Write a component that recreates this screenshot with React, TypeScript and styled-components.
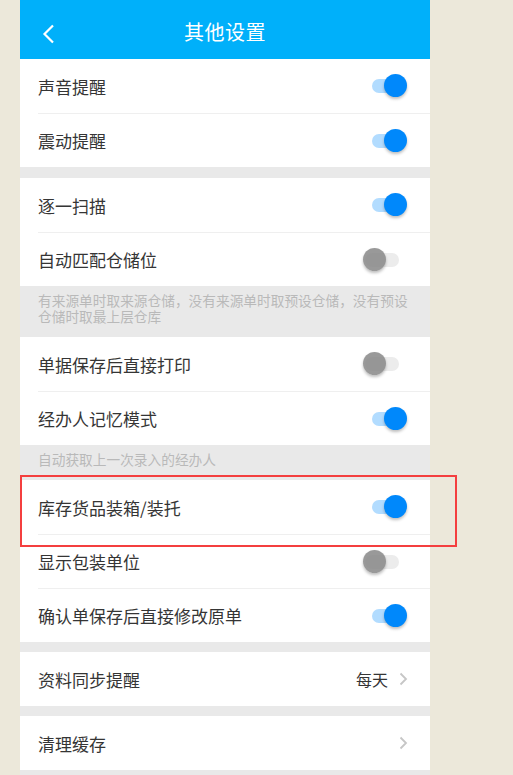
import React from "react";
import styled, { createGlobalStyle } from "styled-components";

const Global = createGlobalStyle`
  html, body { margin: 0; padding: 0; background: #ece8da; }
  body { font-family: "Noto Sans CJK SC", "Noto Sans", sans-serif; }
`;

const Page = styled.div`
  position: relative;
  width: 513px;
  height: 775px;
  overflow: hidden;
  padding-left: 20px;
  box-sizing: border-box;
`;

const Screen = styled.div`
  width: 410px;
  min-height: 775px;
  background: #e9e9e9;
`;

const Header = styled.div`
  height: 59px;
  background: #00b0fa;
  display: flex;
  align-items: center;
  justify-content: center;
  position: relative;
  padding-top: 4px;
  box-sizing: border-box;
`;

const Title = styled.div`
  color: #fff;
  font-size: 20px;
  letter-spacing: 0.5px;
`;

const Back = styled.div`
  position: absolute;
  left: 20px;
  top: 24px;
  width: 16px;
  height: 20px;
`;

const Group = styled.div<{ $gap?: number }>`
  background: #fff;
  margin-top: ${(p) => p.$gap ?? 0}px;
`;

const Row = styled.div`
  padding-left: 18px;
  & + & > div { border-top: 1px solid #efefef; }
`;

const RowInner = styled.div`
  height: 54px;
  box-sizing: border-box;
  display: flex;
  align-items: center;
  justify-content: space-between;
  padding-right: 22px;
`;

const Label = styled.span`
  font-size: 17px;
  color: #353535;
`;

const Note = styled.div`
  background: #e9e9e9;
  color: #b9b9b9;
  font-size: 13.7px;
  line-height: 16px;
  padding: 6px 18px 13px;
`;

const Track = styled.div<{ $on: boolean }>`
  position: relative;
  width: 34px;
  height: 14px;
  border-radius: 7px;
  background: ${(p) => (p.$on ? "#b2dcff" : "#ececec")};
  margin-right: ${(p) => (p.$on ? "2px" : "9px")};
`;

const Knob = styled.div<{ $on: boolean }>`
  position: absolute;
  top: -5px;
  left: ${(p) => (p.$on ? "12px" : "-2px")};
  width: 23px;
  height: 23px;
  border-radius: 50%;
  background: ${(p) => (p.$on ? "#0088fb" : "rgba(135,135,135,0.85)")};
  box-shadow: 0 2px 3px rgba(0, 0, 0, 0.25);
`;

const Right = styled.div`
  display: flex;
  align-items: center;
  gap: 11px;
`;

const Value = styled.span`
  font-size: 16px;
  color: #353535;
`;

const Highlight = styled.div`
  position: absolute;
  left: 20px;
  top: 475px;
  width: 433px;
  height: 68px;
  border: 2px solid #f43f3f;
`;

const Toggle = ({ on }: { on: boolean }) => (
  <Track $on={on}>
    <Knob $on={on} />
  </Track>
);

const Chevron = () => (
  <svg width="9" height="14" viewBox="0 0 9 14">
    <path d="M1.5 1.5 L7 7 L1.5 12.5" fill="none" stroke="#c6c6c6" strokeWidth="1.8" />
  </svg>
);

const ToggleRow = ({ label, on }: { label: string; on: boolean }) => (
  <Row>
    <RowInner>
      <Label>{label}</Label>
      <Toggle on={on} />
    </RowInner>
  </Row>
);

export default function App() {
  return (
    <>
      <Global />
      <Page>
        <Screen>
          <Header>
            <Back>
              <svg width="16" height="20" viewBox="0 0 16 20">
                <path d="M13 1.5 L4.5 10 L13 18.5" fill="none" stroke="#fff" strokeWidth="2.2" />
              </svg>
            </Back>
            <Title>其他设置</Title>
          </Header>
          <Group>
            <ToggleRow label="声音提醒" on />
            <ToggleRow label="震动提醒" on />
          </Group>
          <Group $gap={11}>
            <ToggleRow label="逐一扫描" on />
            <ToggleRow label="自动匹配仓储位" on={false} />
          </Group>
          <Note>有来源单时取来源仓储，没有来源单时取预设仓储，没有预设仓储时取最上层仓库</Note>
          <Group>
            <ToggleRow label="单据保存后直接打印" on={false} />
            <ToggleRow label="经办人记忆模式" on />
          </Group>
          <Note>自动获取上一次录入的经办人</Note>
          <Group>
            <ToggleRow label="库存货品装箱/装托" on />
            <ToggleRow label="显示包装单位" on={false} />
            <ToggleRow label="确认单保存后直接修改原单" on />
          </Group>
          <Group $gap={10}>
            <Row>
              <RowInner>
                <Label>资料同步提醒</Label>
                <Right>
                  <Value>每天</Value>
                  <Chevron />
                </Right>
              </RowInner>
            </Row>
          </Group>
          <Group $gap={10}>
            <Row>
              <RowInner>
                <Label>清理缓存</Label>
                <Right>
                  <Chevron />
                </Right>
              </RowInner>
            </Row>
          </Group>
        </Screen>
        <Highlight />
      </Page>
    </>
  );
}
